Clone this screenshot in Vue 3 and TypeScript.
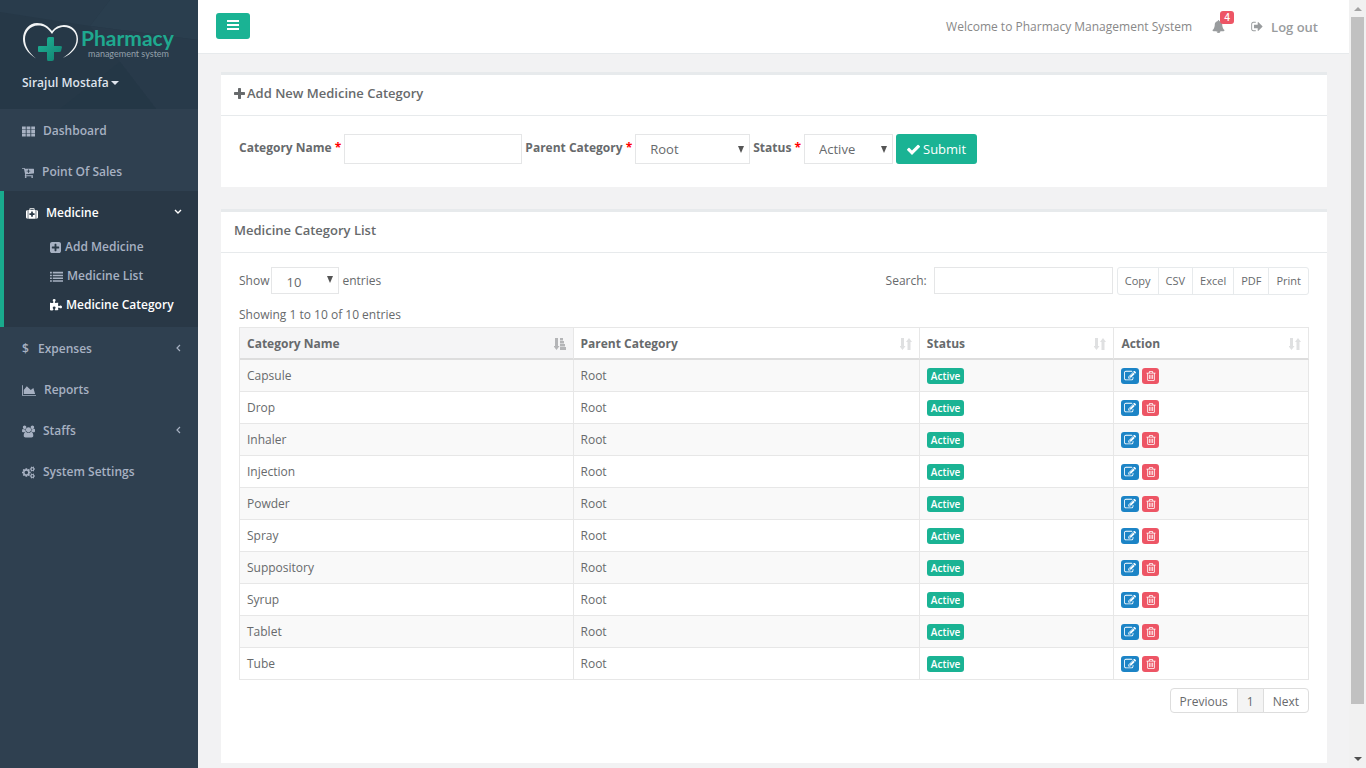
<script setup lang="ts">
import { ref } from 'vue'

interface Icon {
  box: string
  path: string
}

const icons: Record<string, Icon> = {
  th: {
    box: '64 64 1664 1664',
    path: 'M64 256h480v384h-480zM656 256h480v384h-480zM1248 256h480v384h-480zM64 704h480v384h-480zM656 704h480v384h-480zM1248 704h480v384h-480zM64 1152h480v384h-480zM656 1152h480v384h-480zM1248 1152h480v384h-480z',
  },
  cart: {
    box: '64 0 1664 1792',
    path: 'M1216 704q0-26-19-45t-45-19h-128v-128q0-26-19-45t-45-19-45 19-19 45v128h-128q-26 0-45 19t-19 45 19 45 45 19h128v128q0 26 19 45t45 19 45-19 19-45v-128h128q26 0 45-19t19-45zm-512 832q0 53-37.5 90.5t-90.5 37.5-90.5-37.5-37.5-90.5 37.5-90.5 90.5-37.5 90.5 37.5 37.5 90.5zm896 0q0 53-37.5 90.5t-90.5 37.5-90.5-37.5-37.5-90.5 37.5-90.5 90.5-37.5 90.5 37.5 37.5 90.5zm128-1088v512q0 24-16 42.5t-41 21.5l-1044 122q1 7 4.5 21.5t6 26.5 2.5 22q0 16-24 64h920q26 0 45 19t19 45-19 45-45 19h-1024q-26 0-45-19t-19-45q0-14 11-39.5t29.5-59.5 20.5-38l-177-823h-204q-26 0-45-19t-19-45 19-45 45-19h256q16 0 28.5 6.5t20 15.5 13 24.5 7.5 26.5 5.5 29.5 4.5 25.5h1201q26 0 45 19t19 45z',
  },
  medkit: {
    box: '0 0 1792 1792',
    path: 'M1280 1088v-192q0-14-9-23t-23-9h-224v-224q0-14-9-23t-23-9h-192q-14 0-23 9t-9 23v224h-224q-14 0-23 9t-9 23v192q0 14 9 23t23 9h224v224q0 14 9 23t23 9h192q14 0 23-9t9-23v-224h224q14 0 23-9t9-23zm-640-704h512v-128h-512v128zm-384 0v1280h-32q-92 0-158-66t-66-158v-832q0-92 66-158t158-66h32zm1184 0v1280h-1088v-1280h160v-160q0-40 28-68t68-28h576q40 0 68 28t28 68v160h160zm352 224v832q0 92-66 158t-158 66h-32v-1280h32q92 0 158 66t66 158z',
  },
  plusSquare: {
    box: '128 128 1536 1536',
    path: 'M1408 960v-128q0-26-19-45t-45-19h-320v-320q0-26-19-45t-45-19h-128q-26 0-45 19t-19 45v320h-320q-26 0-45 19t-19 45v128q0 26 19 45t45 19h320v320q0 26 19 45t45 19h128q26 0 45-19t19-45v-320h320q26 0 45-19t19-45zm256-544v960q0 119-84.5 203.5t-203.5 84.5h-960q-119 0-203.5-84.5t-84.5-203.5v-960q0-119 84.5-203.5t203.5-84.5h960q119 0 203.5 84.5t84.5 203.5z',
  },
  list: {
    box: '0 0 1792 1792',
    path: 'M0 256h256v224h-256zM384 256h1408v224h-1408zM0 640h256v224h-256zM384 640h1408v224h-1408zM0 1024h256v224h-256zM384 1024h1408v224h-1408zM0 1408h256v224h-256zM384 1408h1408v224h-1408z',
  },
  puzzle: {
    box: '64 0 1664 1792',
    path: 'M1728 1098q0 81-44.5 135t-123.5 54q-41 0-77.5-17.5t-59-38-56.5-38-71-17.5q-110 0-110 124 0 39 16 115t15 115v5q-22 0-33 1-34 3-97.5 11.5t-115.5 13.5-98 5q-61 0-103-26.5t-42-83.5q0-37 17.5-71t38-56.5 38-59 17.5-77.5q0-79-54-123.5t-135-44.5q-84 0-143 45.5t-59 127.5q0 43 15 83t33.5 64.5 33.5 53 15 50.5q0 45-46 89-37 35-117 35-95 0-245-24-9-2-27.5-4t-27.5-4l-13-2q-1 0-3-1-2 0-2-1v-1024q2 1 17.5 3.5t34 5 21.5 3.5q150 24 245 24 80 0 117-35 46-44 46-89 0-22-15-50.5t-33.5-53-33.5-64.5-15-83q0-82 59-127.5t144-45.5q80 0 134 44.5t54 123.5q0 41-17.5 77.5t-38 59-38 56.5-17.5 71q0 57 42 83.5t103 26.5q64 0 180-15t163-17v2q-1 2-3.5 17.5t-5 34-3.5 21.5q-24 150-24 245 0 80 35 117 44 46 89 46 22 0 50.5-15t53-33.5 64.5-33.5 83-15q82 0 127.5 59t45.5 143z',
  },
  area: {
    box: '0 0 2048 1792',
    path: 'M2048 1536v128h-2048v-1536h128v1408h1920zm-384-1024l256 896h-1664v-576l448-576 576 576z',
  },
  users: {
    box: '0 0 1920 1792',
    path: 'M593 896q-162 5-265 128h-134q-82 0-138-40.5t-56-118.5q0-353 124-353 6 0 43.5 21t97.5 42.5 119 21.5q67 0 133-23-5 37-5 66 0 159 93 293zm1071 637q0 120-73 189.5t-194 69.5h-874q-121 0-194-69.5t-73-189.5q0-53 3.5-103.5t14-109 26.5-108.5 43-97.5 62-81 85.5-53.5 111.5-20q10 0 43 21.5t73 48 107 48 135 21.5 135-21.5 107-48 73-48 43-21.5q61 0 111.5 20t85.5 53.5 62 81 43 97.5 26.5 108.5 14 109 3.5 103.5zm-1024-1277q0 106-75 181t-181 75-181-75-75-181 75-181 181-75 181 75 75 181zm704 384q0 159-112.5 271.5t-271.5 112.5-271.5-112.5-112.5-271.5 112.5-271.5 271.5-112.5 271.5 112.5 112.5 271.5zm576 225q0 78-56 118.5t-138 40.5h-134q-103-123-265-128 93-134 93-293 0-29-5-66 66 23 133 23 59 0 119-21.5t97.5-42.5 43.5-21q124 0 124 353zm-128-609q0 106-75 181t-181 75-181-75-75-181 75-181 181-75 181 75 75 181z',
  },
  cogs: {
    box: '0 0 1920 1792',
    path: 'M896 896q0-106-75-181t-181-75-181 75-75 181 75 181 181 75 181-75 75-181zm768 512q0-52-38-90t-90-38-90 38-38 90q0 53 37.5 90.5t90.5 37.5 90.5-37.5 37.5-90.5zm0-1024q0-52-38-90t-90-38-90 38-38 90q0 53 37.5 90.5t90.5 37.5 90.5-37.5 37.5-90.5zm-384 421v185q0 10-7 19.5t-16 10.5l-155 24q-11 35-32 76 34 48 90 115 7 11 7 20 0 12-7 19-23 30-82.5 89.5t-78.5 59.5q-11 0-21-7l-115-90q-37 19-77 31-11 108-23 155-7 24-30 24h-186q-11 0-20-7.5t-10-17.5l-23-153q-34-10-75-31l-118 89q-7 7-20 7-11 0-21-8-144-133-144-160 0-9 7-19 10-14 41-53t47-61q-23-44-35-82l-152-24q-10-1-17-9.5t-7-19.5v-185q0-10 7-19.5t16-10.5l155-24q11-35 32-76-34-48-90-115-7-11-7-20 0-12 7-20 22-30 82-89t79-59q11 0 21 7l115 90q34-18 77-32 11-108 23-154 7-24 30-24h186q11 0 20 7.5t10 17.5l23 153q34 10 75 31l118-89q8-7 20-7 11 0 21 8 144 133 144 160 0 8-7 19-12 16-42 54t-45 60q23 48 34 82l152 23q10 2 17 10.5t7 19.5zm640 533v140q0 16-149 31-12 27-30 52 51 113 51 138 0 4-4 7-122 71-124 71-8 0-46-47t-52-68q-20 2-30 2t-30-2q-14 21-52 68t-46 47q-2 0-124-71-4-3-4-7 0-25 51-138-18-25-30-52-149-15-149-31v-140q0-16 149-31 13-29 30-52-51-113-51-138 0-4 4-7 4-2 35-20t59-34 30-16q8 0 46 46.5t52 67.5q20-2 30-2t30 2q51-71 92-112l6-2q4 0 124 70 4 3 4 7 0 25-51 138 17 23 30 52 149 15 149 31zm0-1024v140q0 16-149 31-12 27-30 52 51 113 51 138 0 4-4 7-122 71-124 71-8 0-46-47t-52-68q-20 2-30 2t-30-2q-14 21-52 68t-46 47q-2 0-124-71-4-3-4-7 0-25 51-138-18-25-30-52-149-15-149-31v-140q0-16 149-31 13-29 30-52-51-113-51-138 0-4 4-7 4-2 35-20t59-34 30-16q8 0 46 46.5t52 67.5q20-2 30-2t30 2q51-71 92-112l6-2q4 0 124 70 4 3 4 7 0 25-51 138 17 23 30 52 149 15 149 31z',
  },
}

interface MenuItem {
  label: string
  icon: string
  width: number
  children?: MenuItem[]
  more?: boolean
}

const menu: MenuItem[] = [
  { label: 'Dashboard', icon: 'th', width: 13 },
  { label: 'Point Of Sales', icon: 'cart', width: 12 },
  {
    label: 'Medicine',
    icon: 'medkit',
    width: 12,
    children: [
      { label: 'Add Medicine', icon: 'plusSquare', width: 11 },
      { label: 'Medicine List', icon: 'list', width: 13 },
      { label: 'Medicine Category', icon: 'puzzle', width: 12 },
    ],
  },
  { label: 'Expenses', icon: '$', width: 8, more: true },
  { label: 'Reports', icon: 'area', width: 14 },
  { label: 'Staffs', icon: 'users', width: 13, more: true },
  { label: 'System Settings', icon: 'cogs', width: 13 },
]

const categories = ['Capsule', 'Drop', 'Inhaler', 'Injection', 'Powder', 'Spray', 'Suppository', 'Syrup', 'Tablet', 'Tube']
const columns = ['Category Name', 'Parent Category', 'Status', 'Action']
const exportsList = ['Copy', 'CSV', 'Excel', 'PDF', 'Print']

const name = ref('')
const parent = ref('Root')
const status = ref('Active')
const pageSize = ref('10')
const search = ref('')
</script>

<template>
  <div class="app">
    <nav class="sidebar">
      <div class="brand">
        <svg class="facets" viewBox="0 0 198 109" preserveAspectRatio="none" aria-hidden="true">
          <path d="M0 0h110L90 26 0 12z" fill="#293c4c" />
          <path d="M110 0h88v40L90 26z" fill="#2a3e4e" />
          <path d="M90 26l108 14v69h-42L120 62z" fill="#283a4a" />
          <path d="M120 62l36 47H60z" fill="#243746" />
        </svg>
        <a class="logo" href="#">
          <svg width="57" height="40" viewBox="0 0 57 40" aria-hidden="true">
            <defs>
              <linearGradient id="cross" x1="0" y1="0" x2="1" y2="1">
                <stop offset="0" stop-color="#1fb597" />
                <stop offset="1" stop-color="#12806f" />
              </linearGradient>
            </defs>
            <path d="M14 36.500C5 31 1 24 1 17C1 8 7 1 15 1C22 1 26 4 30 9C33 5 37 3 42 3C50 3 56 9 56 17C56 25 50 32 41 36C49 30 54.500 25 54.500 17C54.500 10 49 5 42 5C37 5 33 7 30 12C26 6 22 3.500 16 3.500C8 3.500 3 10 3 17C3 24 7 31 14 36.500z" fill="#f2f4f5" />
            <path d="M27 15h4q1 0 1 1v8h6q2 0 2 1l-1 4q0 1-2 1h-5v7q0 2-2 2h-4q-1 0-1-2v-7h-8q-1 0-1-1v-4q0-1 1-1h8v-6q0-3 2-3z" fill="url(#cross)" />
          </svg>
          <span class="wordmark">
            <span class="word">Pharmacy</span>
            <span class="tag">management system</span>
          </span>
        </a>
        <button class="user" type="button">Sirajul Mostafa<span class="caret"></span></button>
      </div>
      <ul class="menu">
        <li v-for="item in menu" :key="item.label" :class="{ active: item.children }">
          <a href="#" class="item">
            <span v-if="item.icon === '$'" class="dollar">$</span>
            <svg v-else :width="item.width" height="13" :viewBox="icons[item.icon].box" aria-hidden="true">
              <path :d="icons[item.icon].path" fill="currentColor" />
            </svg>
            <span>{{ item.label }}</span>
            <svg v-if="item.children" class="arrow" width="8" height="8" viewBox="0 0 8 8" aria-hidden="true">
              <path d="M1 2l3 3 3-3" fill="none" stroke="currentColor" stroke-width="1.4" />
            </svg>
            <svg v-else-if="item.more" class="arrow" width="8" height="8" viewBox="0 0 8 8" aria-hidden="true">
              <path d="M6 1L3 4l3 3" fill="none" stroke="currentColor" stroke-width="1.2" />
            </svg>
          </a>
          <ul v-if="item.children" class="submenu">
            <li v-for="child in item.children" :key="child.label">
              <a href="#" class="subitem" :class="{ current: child.label === 'Medicine Category' }">
                <svg :width="child.width" height="13" :viewBox="icons[child.icon].box" aria-hidden="true">
                  <path :d="icons[child.icon].path" fill="currentColor" />
                </svg>
                <span>{{ child.label }}</span>
              </a>
            </li>
          </ul>
        </li>
      </ul>
    </nav>

    <div class="page">
      <header class="topbar">
        <button class="toggle" type="button" aria-label="Toggle menu">
          <svg width="12" height="10" viewBox="0 0 12 10" aria-hidden="true">
            <path d="M0 0h12v2H0zM0 4h12v2H0zM0 8h12v2H0z" fill="#fff" />
          </svg>
        </button>
        <span class="welcome">Welcome to Pharmacy Management System</span>
        <a class="bell" href="#" aria-label="Notifications">
          <svg width="13" height="13" viewBox="0 0 1792 1792" aria-hidden="true">
            <path fill="currentColor" d="M912 1696q0-16-16-16-59 0-101.5-42.5t-42.5-101.5q0-16-16-16t-16 16q0 73 51.5 124.5t124.5 51.5q16 0 16-16zm816-288q0 52-38 90t-90 38h-448q0 106-75 181t-181 75-181-75-75-181h-448q-52 0-90-38t-38-90q50-42 91-88t85-119.5 74.5-158.5 50-206 19.5-260q0-152 117-282.5t307-158.5q-8-19-8-39 0-40 28-68t68-28 68 28 28 68q0 20-8 39 190 28 307 158.5t117 282.5q0 139 19.5 260t50 206 74.5 158.5 85 119.500 91 88z" />
          </svg>
          <span class="count">4</span>
        </a>
        <a class="logout" href="#">
          <svg width="12" height="13" viewBox="64 0 1600 1792" aria-hidden="true">
            <path fill="currentColor" d="M704 1440q0 4 1 20t.5 26.5-3 23.5-10 19.5-20.5 6.5h-320q-119 0-203.5-84.5t-84.5-203.5v-704q0-119 84.5-203.5t203.5-84.5h320q13 0 22.5 9.5t9.5 22.5q0 4 1 20t.5 26.5-3 23.5-10 19.5-20.5 6.5h-320q-66 0-113 47t-47 113v704q0 66 47 113t113 47h312l11.5 1 11.5 3 8 5.5 7 9 2 13.5zm928-544q0 26-19 45l-544 544q-19 19-45 19t-45-19-19-45v-288h-448q-26 0-45-19t-19-45v-384q0-26 19-45t45-19h448v-288q0-26 19-45t45-19 45 19l544 544q19 19 19 45z" />
          </svg>
          <span>Log out</span>
        </a>
      </header>

      <main class="content">
        <section class="panel">
          <h5 class="title">
            <svg width="11" height="11" viewBox="192 128 1408 1408" aria-hidden="true">
              <path fill="currentColor" d="M1600 736v192q0 40-28 68t-68 28h-416v416q0 40-28 68t-68 28h-192q-40 0-68-28t-28-68v-416h-416q-40 0-68-28t-28-68v-192q0-40 28-68t68-28h416v-416q0-40 28-68t68-28h192q40 0 68 28t28 68v416h416q40 0 68 28t28 68z" />
            </svg>
            <span>Add New Medicine Category</span>
          </h5>
          <form class="form" @submit.prevent>
            <label for="name">Category Name <span class="star">*</span></label>
            <input id="name" v-model="name" class="field name" type="text" />
            <label for="parent">Parent Category <span class="star">*</span></label>
            <span class="select parent">
              <select id="parent" v-model="parent" class="field"><option>Root</option></select>
            </span>
            <label for="status">Status <span class="star">*</span></label>
            <span class="select status">
              <select id="status" v-model="status" class="field"><option>Active</option><option>Inactive</option></select>
            </span>
            <button class="submit" type="submit">
              <svg width="13" height="13" viewBox="120 128 1552 1552" aria-hidden="true">
                <path fill="currentColor" d="M1671 566q0 40-28 68l-724 724-136 136q-28 28-68 28t-68-28l-136-136-362-362q-28-28-28-68t28-68l136-136q28-28 68-28t68 28l294 295 656-657q28-28 68-28t68 28l136 136q28 28 28 68z" />
              </svg>
              <span>Submit</span>
            </button>
          </form>
        </section>

        <section class="panel">
          <h5 class="title">Medicine Category List</h5>
          <div class="list">
            <div class="tools">
              <label for="size">Show</label>
              <span class="select size">
                <select id="size" v-model="pageSize" class="field"><option>10</option><option>25</option><option>50</option></select>
              </span>
              <span>entries</span>
              <label class="search-label" for="search">Search:</label>
              <input id="search" v-model="search" class="field search" type="search" />
              <div class="exports">
                <button v-for="e in exportsList" :key="e" type="button">{{ e }}</button>
              </div>
            </div>
            <p class="info">Showing 1 to 10 of 10 entries</p>
            <table class="grid">
              <colgroup>
                <col class="c-name" />
                <col class="c-parent" />
                <col class="c-status" />
                <col class="c-action" />
              </colgroup>
              <thead>
                <tr>
                  <th v-for="(c, i) in columns" :key="c" scope="col" :class="{ sorted: i === 0 }">
                    <div class="head">
                      <span>{{ c }}</span>
                      <svg v-if="i === 0" width="12" height="12" viewBox="0 0 12 12" aria-hidden="true">
                        <path d="M1 0h3v8h1.500L2.500 12-.5 8H1zM6 0h3v2.500H6zM6 3h4v2.500H6zM6 6h5v2.500H6zM6 9h6v3H6z" fill="#b4b5b7" />
                      </svg>
                      <svg v-else width="12" height="12" viewBox="0 0 12 12" aria-hidden="true">
                        <path d="M1 0h3v8h1.500L2.500 12-.5 8H1zM7.500 12h3V4H12L9 0 6 4h1.500z" fill="#dfe0e1" />
                      </svg>
                    </div>
                  </th>
                </tr>
              </thead>
              <tbody>
                <tr v-for="c in categories" :key="c">
                  <td>{{ c }}</td>
                  <td>Root</td>
                  <td><div class="cell"><span class="badge">Active</span></div></td>
                  <td>
                    <div class="cell">
                      <button class="act edit" type="button" :aria-label="'Edit ' + c">
                        <svg width="12" height="12" viewBox="0 0 1792 1792" aria-hidden="true">
                          <path fill="currentColor" d="M888 1184l116-116-152-152-116 116v56h96v96h56zm440-720q-16-16-33 1l-350 350q-17 17-1 33t33-1l350-350q17-17 1-33zm80 594v190q0 119-84.5 203.5t-203.5 84.5h-832q-119 0-203.5-84.5t-84.5-203.5v-832q0-119 84.5-203.5t203.5-84.5h832q63 0 117 25 15 7 18 23 3 17-9 29l-49 49q-14 14-32 8-23-6-45-6h-832q-66 0-113 47t-47 113v832q0 66 47 113t113 47h832q66 0 113-47t47-113v-126q0-13 9-22l64-64q15-15 35-7t20 29zm-96-738l288 288-672 672h-288v-288zm444 132l-92 92-288-288 92-92q28-28 68-28t68 28l152 152q28 28 28 68t-28 68z" />
                        </svg>
                      </button>
                      <button class="act delete" type="button" :aria-label="'Delete ' + c">
                        <svg width="10" height="10" viewBox="128 128 1536 1536" aria-hidden="true">
                          <path fill="currentColor" d="M704 736v576q0 14-9 23t-23 9h-64q-14 0-23-9t-9-23v-576q0-14 9-23t23-9h64q14 0 23 9t9 23zm256 0v576q0 14-9 23t-23 9h-64q-14 0-23-9t-9-23v-576q0-14 9-23t23-9h64q14 0 23 9t9 23zm256 0v576q0 14-9 23t-23 9h-64q-14 0-23-9t-9-23v-576q0-14 9-23t23-9h64q14 0 23 9t9 23zm128 724v-948h-896v948q0 22 7 40.5t14.5 27 10.5 8.5h832q3 0 10.5-8.5t14.5-27 7-40.5zm-672-1076h448l-48-117q-7-9-17-11h-317q-10 2-17 11zm928 32v64q0 14-9 23t-23 9h-96v948q0 83-47 143.5t-113 60.5h-832q-66 0-113-58.5t-47-141.5v-952h-96q-14 0-23-9t-9-23v-64q0-14 9-23t23-9h309l70-167q15-37 54-63t79-26h320q40 0 79 26t54 63l70 167h309q14 0 23 9t9 23z" />
                        </svg>
                      </button>
                    </div>
                  </td>
                </tr>
              </tbody>
            </table>
            <div class="pager">
              <button type="button">Previous</button>
              <button type="button" class="on">1</button>
              <button type="button">Next</button>
            </div>
          </div>
        </section>
      </main>
    </div>

    <div class="scrollbar" aria-hidden="true">
      <svg width="17" height="17" viewBox="0 0 17 17"><path d="M5 11h8L9 7z" fill="#a3a3a3" /></svg>
      <div class="track"><div class="thumb"></div></div>
      <svg width="17" height="17" viewBox="0 0 17 17"><path d="M5 6h8l-4 4z" fill="#505050" /></svg>
    </div>
  </div>
</template>

<style>
body {
  margin: 0;
  background: #f2f2f3;
}
</style>

<style scoped>
.app {
  display: flex;
  min-height: 100vh;
  font: 12px/18px 'Open Sans', 'Liberation Sans', sans-serif;
  color: #676a6c;
}
.app *,
.app *::before,
.app *::after {
  box-sizing: border-box;
}
a {
  color: inherit;
  text-decoration: none;
}
button,
input,
select {
  font: inherit;
  color: inherit;
  margin: 0;
}
button {
  cursor: pointer;
}
svg {
  flex: none;
}

/* Sidebar */
.sidebar {
  flex: none;
  width: 198px;
  background: #2f4050;
  color: #a7b1c2;
  font-weight: 600;
}
.brand {
  position: relative;
  height: 109px;
  padding: 22px 22px 0;
  background: #263847;
}
.facets {
  position: absolute;
  inset: 0;
  width: 100%;
  height: 100%;
}
.logo {
  position: relative;
  display: flex;
  gap: 2px;
  height: 40px;
}
.wordmark {
  display: flex;
  flex-direction: column;
  padding-top: 5px;
}
.word {
  font: 700 21px/21px Lato, 'Open Sans', sans-serif;
  color: #1fa98f;
}
.tag {
  margin-left: 7px;
  font: 400 9px/11px Lato, 'Open Sans', sans-serif;
  color: #93a0ab;
  white-space: nowrap;
}
.user {
  position: relative;
  display: flex;
  align-items: center;
  gap: 2px;
  margin-top: 12px;
  padding: 0;
  border: 0;
  background: none;
  color: #dfe4ed;
}
.caret {
  border: 4px solid transparent;
  border-top-color: currentColor;
  border-bottom: 0;
}
.menu,
.submenu {
  margin: 0;
  padding: 0;
  list-style: none;
}
.item {
  display: flex;
  align-items: center;
  gap: 8px;
  height: 41px;
  padding: 3px 16px 0 22px;
}
.dollar {
  width: 8px;
}
.arrow {
  margin: 0 0 3px auto;
}
.active {
  border-left: 4px solid #19aa8d;
  background: #293846;
  padding-bottom: 8px;
}
.active > .item {
  color: #fff;
}
.subitem {
  display: flex;
  align-items: center;
  gap: 4px;
  height: 29px;
  padding: 1px 0 0 46px;
}
.current {
  color: #fff;
}

/* Top bar */
.page {
  flex: 1;
  min-width: 0;
}
.topbar {
  display: flex;
  align-items: center;
  height: 54px;
  padding: 0 31px 0 18px;
  background: #fff;
  border-bottom: 1px solid #e7eaec;
  color: #999c9e;
}
.toggle {
  display: flex;
  align-items: center;
  justify-content: center;
  width: 34px;
  height: 26px;
  margin-bottom: 2px;
  padding: 0 0 2px;
  border: 0;
  border-radius: 3px;
  background: #1ab394;
}
.welcome {
  margin-left: auto;
  color: #888;
}
.bell {
  position: relative;
  display: flex;
  margin: 0 26px 0 20px;
}
.count {
  position: absolute;
  top: -9px;
  left: 8px;
  width: 14px;
  border-radius: 3px;
  background: #ed5565;
  color: #fff;
  font: 600 10px/13px 'Open Sans', sans-serif;
  text-align: center;
}
.logout {
  display: flex;
  align-items: center;
  gap: 8px;
  font-size: 13px;
  font-weight: 600;
}

/* Panels */
.content {
  padding: 18px 22px 5px 23px;
}
.panel {
  border-top: 3px solid #e7eaec;
  background: #fff;
}
.panel + .panel {
  margin-top: 22px;
}
.title {
  display: flex;
  align-items: center;
  gap: 2px;
  height: 41px;
  margin: 0;
  padding: 0 13px 4px;
  border-bottom: 1px solid #e7eaec;
  font-size: 13px;
  font-weight: 600;
}
.form {
  display: flex;
  align-items: center;
  gap: 3px;
  height: 71px;
  padding: 0 18px 5px;
}
.form label {
  padding-bottom: 3px;
  font-weight: 700;
  white-space: nowrap;
}
.star {
  color: #f00;
}
.field {
  height: 30px;
  border: 1px solid #e5e6e7;
  border-radius: 0;
  background: #fff;
  outline: 0;
  font-size: 13px;
}
.name {
  width: 178px;
}
.select {
  position: relative;
  display: inline-flex;
}
.select .field {
  width: 100%;
  padding: 0 14px;
  appearance: none;
}
.select::after {
  content: '';
  position: absolute;
  top: 12px;
  right: 6px;
  border: 3px solid transparent;
  border-top: 7px solid #555;
  border-bottom: 0;
  pointer-events: none;
}
.parent {
  width: 115px;
}
.status {
  width: 89px;
}
.submit {
  display: flex;
  align-items: center;
  justify-content: center;
  gap: 3px;
  width: 81px;
  height: 30px;
  padding: 0;
  border: 0;
  border-radius: 3px;
  background: #1ab394;
  color: #fff;
  font-size: 13px;
}
.list {
  padding: 14px 18px 50px;
}
.tools {
  display: flex;
  align-items: flex-start;
  height: 39px;
  line-height: 28px;
}
.size {
  width: 68px;
  margin: 0 3px 0 2px;
}
.size .field,
.search {
  height: 27px;
}
.size::after {
  top: 9px;
}
.search-label {
  margin-left: auto;
}
.search {
  width: 179px;
  margin: 0 4px 0 7px;
}
.exports {
  display: flex;
}
.exports button {
  height: 28px;
  padding: 0 7px;
  border: 1px solid #e7eaec;
  background: #fff;
  font-size: 11px;
  line-height: 18px;
}
.exports button + button,
.pager button + button {
  margin-left: -1px;
}
.exports button:first-child {
  border-radius: 3px 0 0 3px;
}
.exports button:last-child {
  border-radius: 0 3px 3px 0;
}
.info {
  margin: 0 0 3px;
}
.grid {
  width: 100%;
  table-layout: fixed;
  border-collapse: separate;
  border-spacing: 0;
  border-top: 1px solid #e7e7e7;
  border-left: 1px solid #e7e7e7;
}
.c-name {
  width: 31.2%;
}
.c-parent {
  width: 32.4%;
}
.c-status,
.c-action {
  width: 18.2%;
}
.grid th {
  height: 32px;
  padding: 2px 7px 0;
  border-right: 1px solid #e7e7e7;
  border-bottom: 2px solid #ddd;
  text-align: left;
}
.grid td {
  height: 32px;
  padding: 0 7px;
  border-right: 1px solid #e7e7e7;
  border-bottom: 1px solid #e7e7e7;
}
.sorted {
  background: #f5f5f6;
}
.head {
  display: flex;
  align-items: center;
  justify-content: space-between;
}
.grid tbody tr:nth-child(odd) {
  background: #f9f9f9;
}
.cell {
  display: flex;
  align-items: center;
  gap: 3px;
}
.badge {
  padding: 0 4px;
  border-radius: 3px;
  background: #1ab394;
  color: #fff;
  font: 600 10px/16px 'Open Sans', sans-serif;
}
.act {
  display: flex;
  align-items: center;
  justify-content: center;
  height: 16px;
  padding: 0;
  border: 0;
  border-radius: 3px;
  color: #fff;
}
.edit {
  width: 18px;
  background: #1c84c6;
}
.delete {
  width: 17px;
  background: #ed5565;
}
.pager {
  display: flex;
  justify-content: flex-end;
  margin-top: 8px;
}
.pager button {
  height: 25px;
  padding: 2px 9px 0;
  border: 1px solid #ddd;
  background: #fff;
}
.pager button:first-child {
  border-radius: 4px 0 0 4px;
}
.pager button:last-child {
  border-radius: 0 4px 4px 0;
}
.pager .on {
  background: #f4f4f4;
}

/* Scroll bar */
.scrollbar {
  display: flex;
  flex: none;
  flex-direction: column;
  width: 17px;
  background: #f1f1f1;
}
.track {
  flex: 1;
  padding: 0 2px;
}
.thumb {
  height: 93.6%;
  background: #c1c1c1;
}
</style>
